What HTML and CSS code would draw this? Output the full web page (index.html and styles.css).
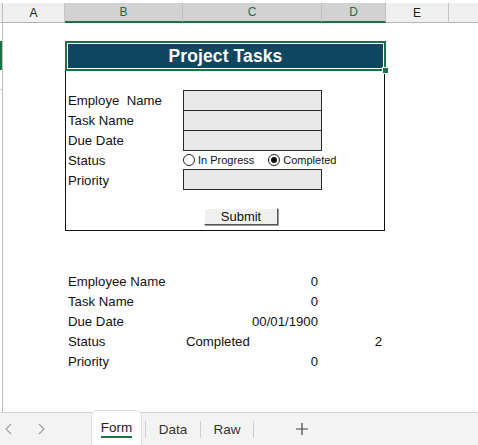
FILE: index.html
```html
<!DOCTYPE html>
<html>
<head>
<meta charset="utf-8">
<link rel="stylesheet" href="styles.css">
</head>
<body>
<div class="app">
  <div class="colheads">
    <div class="corner"></div>
    <div class="ch ch-a">A</div>
    <div class="ch ch-b sel">B</div>
    <div class="ch ch-c sel">C</div>
    <div class="ch ch-d sel">D</div>
    <div class="ch ch-e">E</div>
    <div class="ch ch-f"></div>
  </div>
  <div class="sheet">
    <div class="rowhead"><div class="rowmark"></div><div class="rowtick"></div></div>
    <div class="content">
      <div class="titlebox">
        <span>Project Tasks</span>
        <div class="handle"></div>
      </div>
      <div class="formbody">
        <div class="fgrid">
          <div class="lbl">Employe&nbsp; Name</div>
          <div class="inp"></div>
          <div class="lbl">Task Name</div>
          <div class="inp"></div>
          <div class="lbl">Due Date</div>
          <div class="inp"></div>
          <div class="lbl">Status</div>
          <div class="radios">
            <span class="radio"></span><span class="rtext rt1">In Progress</span>
            <span class="radio on"></span><span class="rtext">Completed</span>
          </div>
          <div class="lbl">Priority</div>
          <div class="inp solo"></div>
        </div>
        <div class="btnrow"><div class="btn">Submit</div></div>
      </div>
      <div class="table">
        <div class="tl">Employee Name</div><div class="tv">0</div><div class="td"></div>
        <div class="tl">Task Name</div><div class="tv">0</div><div class="td"></div>
        <div class="tl">Due Date</div><div class="tv">00/01/1900</div><div class="td"></div>
        <div class="tl">Status</div><div class="tvl">Completed</div><div class="td">2</div>
        <div class="tl">Priority</div><div class="tv">0</div><div class="td"></div>
      </div>
    </div>
  </div>
  <div class="tabbar">
    <div class="nav">
      <svg width="10" height="12" viewBox="0 0 10 12"><path d="M7 1 L2 6 L7 11" fill="none" stroke="#a0a0a0" stroke-width="1.2"/></svg>
      <svg class="nr" width="10" height="12" viewBox="0 0 10 12"><path d="M3 1 L8 6 L3 11" fill="none" stroke="#a0a0a0" stroke-width="1.2"/></svg>
    </div>
    <div class="tab active"><span>Form</span></div>
    <div class="sep"></div>
    <div class="tab t-data">Data</div>
    <div class="sep"></div>
    <div class="tab t-raw">Raw</div>
    <div class="sep"></div>
    <div class="plus">
      <svg width="14" height="14" viewBox="0 0 14 14"><path d="M7 1 V13 M1 7 H13" stroke="#444" stroke-width="1.2"/></svg>
    </div>
  </div>
</div>
</body>
</html>
```
FILE: styles.css
```css
* { box-sizing: border-box; }
html, body { margin: 0; padding: 0; background: #fff; }
body { font-family: "Liberation Sans", Arial, sans-serif; color: #111; }
.app { width: 478px; height: 445px; overflow: hidden; display: flex; flex-direction: column; }

.colheads { display: flex; height: 23px; padding-top: 3px; flex: none; }
.corner { width: 3px; background: #f0f0f0; border-right: 1px solid #bdbdbd; border-bottom: 1px solid #bdbdbd; }
.ch { height: 20px; background: #f0f0f0; border-right: 1px solid #c6c6c6; border-bottom: 1px solid #b5b5b5;
  display: flex; align-items: center; justify-content: center; font-size: 12px; color: #222; }
.ch.sel { background: #d2d2d2; color: #1e6b42; border-bottom: 2px solid #1e7145; border-right-color: #bdbdbd; }
.ch-a { width: 62px; }
.ch-b { width: 118px; }
.ch-c { width: 139px; }
.ch-d { width: 64px; }
.ch-e { width: 63px; }
.ch-f { flex: 1; border-right: none; }

.sheet { flex: 1; display: flex; }
.rowhead { width: 3px; border-right: 1px solid #bdbdbd; flex: none; }
.rowmark { width: 2px; height: 29px; margin-top: 18px; background: #1e7145; }
.rowtick { width: 2px; height: 1px; margin-top: 19px; background: #c8c8c8; }
.content { padding-left: 62px; padding-top: 18px; }

.titlebox { position: relative; width: 321px; height: 30px; background: #0f4761;
  border: 2px solid #1e7145; box-shadow: inset 0 0 0 1px #fff;
  display: flex; align-items: center; justify-content: center; }
.titlebox span { color: #fff; font-weight: bold; font-size: 17.5px; letter-spacing: 0.1px; }
.handle { position: absolute; right: -5px; bottom: -5px; width: 7px; height: 7px; background: #1e7145; border: 1px solid #fff; }

.formbody { width: 320px; height: 160px; border: 1px solid #111; border-top: none; padding-top: 19px; }
.fgrid { display: grid; grid-template-columns: 117px 139px; grid-template-rows: repeat(5, 20px); }
.lbl { font-size: 13.2px; padding-left: 2px; display: flex; align-items: center; color: #111; white-space: nowrap; }
.inp { background: #e8e8e8; border: 1px solid #2a2a2a; height: 21px; }
.inp.solo { margin-top: -1px; }
.radios { display: flex; align-items: center; font-size: 11px; color: #111; white-space: nowrap; }
.radio { width: 12px; height: 12px; border: 1px solid #222; border-radius: 50%; flex: none; display: flex; align-items: center; justify-content: center; background: #fff; }
.radio.on::after { content: ""; width: 6px; height: 6px; border-radius: 50%; background: #111; }
.rtext { margin-left: 3px; flex: none; }
.rt1 { margin-right: 14px; }
.btnrow { padding-left: 138px; padding-top: 18px; }
.btn { width: 74px; height: 17px; background: #f0f0f0; border-top: 1px solid #fff; border-left: 1px solid #fff;
  border-right: 1px solid #555; border-bottom: 1px solid #555; box-shadow: 1px 1px 0 #999;
  font-size: 13px; display: flex; align-items: center; justify-content: center; color: #111; }

.table { display: grid; grid-template-columns: 118px 139px 64px; grid-template-rows: repeat(5, 20px); margin-top: 40px; font-size: 13.2px; }
.tl { padding-left: 3px; display: flex; align-items: center; }
.tv { display: flex; align-items: center; justify-content: flex-end; padding-right: 4px; }
.tvl { display: flex; align-items: center; padding-left: 3px; }
.td { display: flex; align-items: center; justify-content: flex-end; padding-right: 4px; }

.tabbar { flex: none; height: 33px; background: #f3f3f3; border-top: 1px solid #d4d4d4; display: flex; align-items: center; font-size: 13.5px; color: #333; }
.nav { display: flex; align-items: center; width: 92px; padding-left: 4px; }
.nav .nr { margin-left: 22px; }
.tab { height: 100%; display: flex; align-items: center; justify-content: center; }
.tab.active { background: #fff; width: 49px; margin-top: -2px; margin-right: 4px; height: calc(100% + 2px); border-radius: 5px 5px 0 0; box-shadow: 0 0 0 1px #e0e0e0; color: #222; font-weight: 500; }
.tab.active span { border-bottom: 2px solid #1e7145; padding-bottom: 1px; margin-top: 2px; }
.t-data { width: 54px; }
.t-raw { width: 52px; }
.sep { width: 1px; height: 17px; background: #cfcfcf; }
.plus { padding-left: 41px; display: flex; align-items: center; }
```
